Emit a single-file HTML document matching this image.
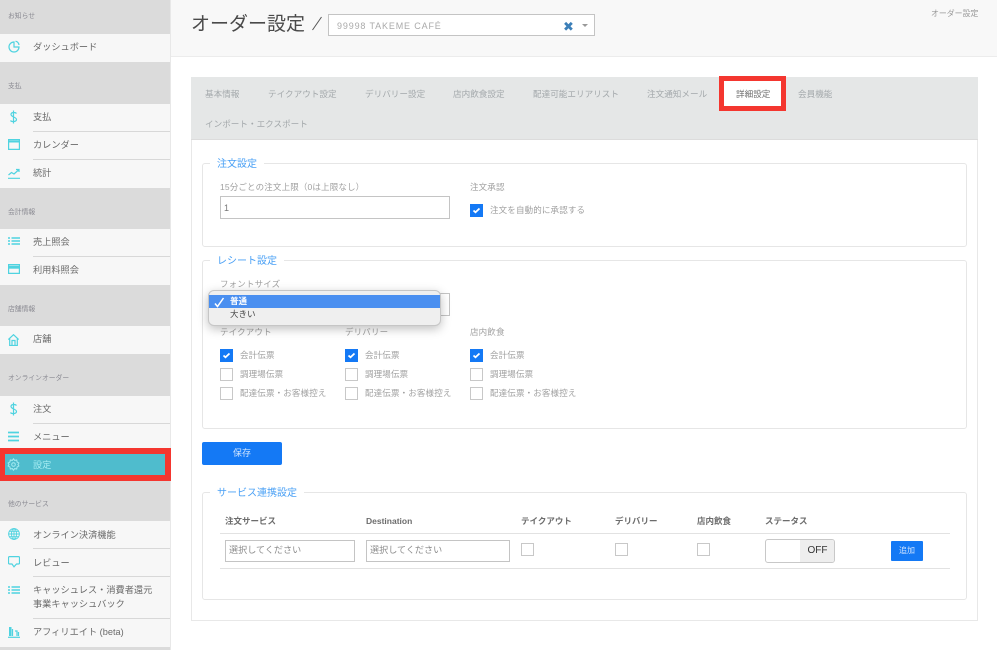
<!DOCTYPE html>
<html lang="ja"><head><meta charset="utf-8"><style>
html,body{margin:0;padding:0;background:#fff}
body{width:997px;height:650px;overflow:hidden;position:relative;font-family:"Liberation Sans","Noto Sans CJK JP",sans-serif;color:#666}
div,span,svg{position:absolute;box-sizing:border-box;white-space:nowrap}
.g{left:0;width:170px;background:#dbdbdb}
.it{left:0;width:170px;background:#f7f7f7}
.h{left:8px;font-size:6.8px;line-height:10px;color:#8a8a92}
.n{left:33px;font-size:9.2px;line-height:14px;color:#6a6a6a}
.sep{left:33px;width:137px;height:1px;background:#d8d8d8}
svg.i{fill:none;stroke:#4fd3e0;stroke-width:1.2}
.tab{font-size:8.6px;line-height:12px;color:#a3a8ab}
.fs{border:1px solid #e6e6e6;border-radius:3px}
.lg{font-size:10px;line-height:14px;color:#4aa0f5;background:#fff;padding:0 7px 0 7px}
.l{font-size:8.5px;line-height:12px;color:#a0a0a0;letter-spacing:.15px}
.cb{width:13px;height:13px;border:1px solid #c8c8c8;background:#fff}
.cb.on{background:#1479f5;border-color:#1479f5}
.cb.on svg{left:1px;top:1px;width:9px;height:9px;fill:none;stroke:#fff;stroke-width:1.8}
.th{font-size:8.5px;font-weight:bold;line-height:12px;color:#6c6c6c}
.sel{border:1px solid #c4c4c4;height:22px;font-size:9.1px;line-height:14px;color:#8c8c8c;padding:2px 0 0 3px;background:#fff}
</style></head><body>

<!-- sidebar -->
<div class="g" style="top:0;height:34px"></div>
<div class="g" style="top:62px;height:42px"></div>
<div class="g" style="top:188px;height:41px"></div>
<div class="g" style="top:285px;height:41px"></div>
<div class="g" style="top:354px;height:42px"></div>
<div class="g" style="top:481px;height:40px"></div>
<div class="g" style="top:647px;height:3px"></div>
<div class="it" style="top:34px;height:28px"></div>
<div class="it" style="top:104px;height:84px"></div>
<div class="it" style="top:229px;height:56px"></div>
<div class="it" style="top:326px;height:28px"></div>
<div class="it" style="top:396px;height:52px"></div>
<div class="it" style="top:521px;height:126px"></div>
<div style="left:170px;top:0;width:1px;height:650px;background:#e8e8e8"></div>

<div class="h" style="top:12px">お知らせ</div>
<div class="h" style="top:82px">支払</div>
<div class="h" style="top:208px">会計情報</div>
<div class="h" style="top:305px">店舗情報</div>
<div class="h" style="top:374px">オンラインオーダー</div>
<div class="h" style="top:500px">他のサービス</div>

<div class="n" style="top:40px">ダッシュボード</div>
<div class="n" style="top:110px">支払</div>
<div class="sep" style="top:131px"></div>
<div class="n" style="top:138px">カレンダー</div>
<div class="sep" style="top:159px"></div>
<div class="n" style="top:166px">統計</div>
<div class="n" style="top:235px">売上照会</div>
<div class="sep" style="top:256px"></div>
<div class="n" style="top:263px">利用料照会</div>
<div class="n" style="top:332px">店舗</div>
<div class="n" style="top:402px">注文</div>
<div class="sep" style="top:423px"></div>
<div class="n" style="top:430px">メニュー</div>
<div class="n" style="top:528px">オンライン決済機能</div>
<div class="sep" style="top:548px"></div>
<div class="n" style="top:556px">レビュー</div>
<div class="sep" style="top:576px"></div>
<div class="n" style="top:583px;line-height:14px">キャッシュレス・消費者還元<br>事業キャッシュバック</div>
<div class="sep" style="top:618px"></div>
<div class="n" style="top:625px">アフィリエイト (beta)</div>

<svg class="i" style="left:8px;top:40px;width:12px;height:13px" viewBox="0 0 12 13"><path d="M6 2a5 5 0 1 0 5 5H6z"/><path d="M7.500 1.200a4.500 4.500 0 0 1 3.500 3.800"/></svg>
<svg class="i" style="left:9px;top:110px;width:9px;height:14px" viewBox="0 0 9 14"><path d="M7.500 3.500C6.500 2 2 2 2 4.500S7.500 7 7.500 9.500 2.500 12 1.500 10.500M4.500.5v13"/></svg>
<svg class="i" style="left:8px;top:139px;width:12px;height:11px" viewBox="0 0 12 11"><path d="M.6.6h10.800v9.800H.6z"/><path d="M.6 2.500h10.800" stroke-width="2"/></svg>
<svg class="i" style="left:8px;top:168px;width:12px;height:11px" viewBox="0 0 12 11"><path d="M0 10.300h12M.5 7 3.500 4.500 6 6l4.500-4M8 1.500h3v2.500"/></svg>
<svg class="i" style="left:8px;top:237px;width:12px;height:8px;stroke-width:1.400" viewBox="0 0 12 8"><path d="M0 1h2M3.500 1H12M0 4h2M3.500 4H12M0 7h2M3.500 7H12"/></svg>
<svg class="i" style="left:8px;top:264px;width:12px;height:10px" viewBox="0 0 12 10"><path d="M.6.6h10.800v8.800H.6z"/><path d="M.6 3.200h10.800" stroke-width="3"/></svg>
<svg class="i" style="left:8px;top:334px;width:11px;height:12px" viewBox="0 0 11 12"><path d="M.3 5.500 5.500.7l5.200 4.800M1.700 4.500v7h7.600v-7M4 11.500V6.500h3v5"/></svg>
<svg class="i" style="left:9px;top:402px;width:9px;height:14px" viewBox="0 0 9 14"><path d="M7.500 3.500C6.500 2 2 2 2 4.500S7.500 7 7.500 9.500 2.500 12 1.500 10.500M4.500.5v13"/></svg>
<svg class="i" style="left:8px;top:431px;width:12px;height:11px;stroke-width:1.700" viewBox="0 0 12 11"><path d="M0 1.500h11M0 5.500h11M0 9.500h11"/></svg>
<svg class="i" style="left:8px;top:528px;width:12px;height:12px;stroke-width:.9" viewBox="0 0 12 12"><circle cx="6" cy="6" r="5.400"/><ellipse cx="6" cy="6" rx="2.500" ry="5.400"/><path d="M.6 6h10.800M1.300 3.300h9.400M1.300 8.700h9.400M6 .6v10.800"/></svg>
<svg class="i" style="left:8px;top:556px;width:12px;height:12px" viewBox="0 0 12 12"><path d="M1.500.6h9a1 1 0 0 1 1 1v5.400a1 1 0 0 1-1 1H8.500L6 10.800 4 8H1.500a1 1 0 0 1-1-1V1.600a1 1 0 0 1 1-1z"/></svg>
<svg class="i" style="left:8px;top:586px;width:12px;height:8px;stroke-width:1.400" viewBox="0 0 12 8"><path d="M0 1h2M3.500 1H12M0 4h2M3.500 4H12M0 7h2M3.500 7H12"/></svg>
<svg class="i" style="left:8px;top:625px;width:12px;height:13px" viewBox="0 0 12 13"><path d="M0 12.300h12"/><path d="M1 2h2.500v9H1z" fill="#4fd3e0" stroke="none"/><path d="M4.500 4v7M7 6h2v5M10.500 7v4"/></svg>

<!-- highlighted settings -->
<div style="left:0;top:448px;width:171px;height:33px;background:#f4362f"></div>
<div style="left:5px;top:454px;width:160px;height:21px;background:#4fbccd"></div>
<svg style="left:7px;top:458px;width:13px;height:13px;fill:none;stroke:#a6ecf2;stroke-width:1" viewBox="0 0 13 13"><path d="M6.500.8l1.200 1.600 2-.4.400 2 1.800 1-.9 1.500.9 1.500-1.800 1-.4 2-2-.4-1.200 1.600-1.200-1.600-2 .4-.4-2-1.800-1 .9-1.500-.9-1.500 1.800-1 .4-2 2 .4z"/><circle cx="6.500" cy="6.500" r="1.800"/></svg>
<div class="n" style="top:458px;color:#a6ecf2">設定</div>

<!-- header -->
<div style="left:171px;top:0;width:826px;height:57px;background:#f8f8f8;border-bottom:1px solid #ececec"></div>
<div style="left:191px;top:13px;font-size:19px;line-height:24px;color:#4a4a4a">オーダー設定</div>
<svg style="left:311px;top:16px;width:12px;height:15px;fill:none;stroke:#555;stroke-width:1" viewBox="0 0 12 15"><path d="M10.500 1 1.500 14"/></svg>
<div style="left:328px;top:14px;width:267px;height:22px;background:#fff;border:1px solid #c4c4c4"></div>
<div style="left:337px;top:20px;font-size:9px;line-height:13px;letter-spacing:.85px;color:#aaa">99998 TAKEME CAFÉ</div>
<div style="left:563px;top:18px;font-size:13px;line-height:17px;color:#3c7fb8">✖</div>
<div style="left:582px;top:24px;width:0;height:0;border-left:3px solid transparent;border-right:3px solid transparent;border-top:3px solid #999"></div>
<div style="left:931px;top:8px;font-size:7.900px;line-height:11px;color:#999">オーダー設定</div>

<!-- panel -->
<div style="left:191px;top:77px;width:787px;height:544px;border:1px solid #e8e8e8;background:#fff"></div>
<div style="left:191px;top:77px;width:787px;height:63px;background:#e5e7e7;border-bottom:1px solid #dcdcdc"></div>
<div class="tab" style="left:205px;top:88px">基本情報</div>
<div class="tab" style="left:268px;top:88px">テイクアウト設定</div>
<div class="tab" style="left:365px;top:88px">デリバリー設定</div>
<div class="tab" style="left:453px;top:88px">店内飲食設定</div>
<div class="tab" style="left:533px;top:88px">配達可能エリアリスト</div>
<div class="tab" style="left:647px;top:88px">注文通知メール</div>
<div style="left:719px;top:76px;width:67px;height:35px;background:#fff;border:5px solid #f4362f"></div>
<div class="tab" style="left:736px;top:88px;color:#6c6c6c">詳細設定</div>
<div class="tab" style="left:798px;top:88px">会員機能</div>
<div class="tab" style="left:205px;top:118px">インポート・エクスポート</div>

<!-- 注文設定 -->
<div class="fs" style="left:202px;top:163px;width:765px;height:84px"></div>
<div class="lg" style="left:210px;top:158px">注文設定</div>
<div class="l" style="left:220px;top:181px">15分ごとの注文上限（0は上限なし）</div>
<div style="left:220px;top:196px;width:230px;height:23px;border:1px solid #c4c4c4;background:#fff;font-size:9px;line-height:22px;padding-left:3px;color:#777">1</div>
<div class="l" style="left:470px;top:181px">注文承認</div>
<div class="cb on" style="left:470px;top:204px"><svg viewBox="0 0 9 9"><path d="M1.500 4.500l2 1.800L7.500 2.500"/></svg></div>
<div class="l" style="left:490px;top:204px">注文を自動的に承認する</div>

<!-- レシート設定 -->
<div class="fs" style="left:202px;top:260px;width:765px;height:169px"></div>
<div class="lg" style="left:210px;top:255px">レシート設定</div>
<div class="l" style="left:220px;top:278px">フォントサイズ</div>
<div style="left:220px;top:293px;width:230px;height:23px;border:1px solid #c4c4c4;background:#fff"></div>
<div class="l" style="left:220px;top:326px">テイクアウト</div>
<div class="l" style="left:345px;top:326px">デリバリー</div>
<div class="l" style="left:470px;top:326px">店内飲食</div>

<div class="cb on" style="left:220px;top:349px"><svg viewBox="0 0 9 9"><path d="M1.500 4.500l2 1.800L7.500 2.500"/></svg></div>
<div class="cb" style="left:220px;top:368px"></div>
<div class="cb" style="left:220px;top:387px"></div>
<div class="l" style="left:240px;top:349px">会計伝票</div>
<div class="l" style="left:240px;top:368px">調理場伝票</div>
<div class="l" style="left:240px;top:387px">配達伝票・お客様控え</div>
<div class="cb on" style="left:345px;top:349px"><svg viewBox="0 0 9 9"><path d="M1.500 4.500l2 1.800L7.500 2.500"/></svg></div>
<div class="cb" style="left:345px;top:368px"></div>
<div class="cb" style="left:345px;top:387px"></div>
<div class="l" style="left:365px;top:349px">会計伝票</div>
<div class="l" style="left:365px;top:368px">調理場伝票</div>
<div class="l" style="left:365px;top:387px">配達伝票・お客様控え</div>
<div class="cb on" style="left:470px;top:349px"><svg viewBox="0 0 9 9"><path d="M1.500 4.500l2 1.800L7.500 2.500"/></svg></div>
<div class="cb" style="left:470px;top:368px"></div>
<div class="cb" style="left:470px;top:387px"></div>
<div class="l" style="left:490px;top:349px">会計伝票</div>
<div class="l" style="left:490px;top:368px">調理場伝票</div>
<div class="l" style="left:490px;top:387px">配達伝票・お客様控え</div>

<!-- dropdown -->
<div style="left:208px;top:290px;width:233px;height:36px;background:#efefef;border:1px solid #c6c6c6;border-radius:6px;box-shadow:0 3px 10px rgba(0,0,0,.25);overflow:hidden"></div>
<div style="left:209px;top:295px;width:231px;height:13px;background:#4a8ff0"></div>
<svg style="left:214px;top:297px;width:11px;height:11px;fill:none;stroke:#fff;stroke-width:1.500" viewBox="0 0 11 11"><path d="M1 6.500l2.500 3L9.500 1"/></svg>
<div style="left:230px;top:296px;font-size:8.500px;line-height:11px;font-weight:bold;color:#fff">普通</div>
<div style="left:230px;top:309px;font-size:8.500px;line-height:11px;color:#444">大きい</div>

<!-- save -->
<div style="left:202px;top:442px;width:80px;height:23px;background:#1479f5;border-radius:2px;color:#cfe4ff;font-size:9px;line-height:22px;text-align:center">保存</div>

<!-- サービス連携設定 -->
<div class="fs" style="left:202px;top:492px;width:765px;height:108px"></div>
<div class="lg" style="left:210px;top:487px">サービス連携設定</div>
<div class="th" style="left:225px;top:515px">注文サービス</div>
<div class="th" style="left:366px;top:515px">Destination</div>
<div class="th" style="left:521px;top:515px">テイクアウト</div>
<div class="th" style="left:615px;top:515px">デリバリー</div>
<div class="th" style="left:697px;top:515px">店内飲食</div>
<div class="th" style="left:765px;top:515px">ステータス</div>
<div style="left:220px;top:533px;width:730px;height:1px;background:#e2e2e2"></div>
<div style="left:220px;top:568px;width:730px;height:1px;background:#e2e2e2"></div>
<div class="sel" style="left:225px;top:540px;width:130px">選択してください</div>
<div class="sel" style="left:366px;top:540px;width:144px">選択してください</div>
<div class="cb" style="left:521px;top:543px"></div>
<div class="cb" style="left:615px;top:543px"></div>
<div class="cb" style="left:697px;top:543px"></div>
<div style="left:765px;top:539px;width:70px;height:24px;border:1px solid #c8c8c8;border-radius:3px;background:#fff;overflow:hidden"><div style="left:34px;top:0;width:35px;height:22px;background:#eee;color:#333;font-size:10px;line-height:22px;text-align:center">OFF</div></div>
<div style="left:891px;top:541px;width:32px;height:20px;background:#1479f5;border-radius:1px;color:#cfe4ff;font-size:8px;line-height:19px;text-align:center">追加</div>

</body></html>
